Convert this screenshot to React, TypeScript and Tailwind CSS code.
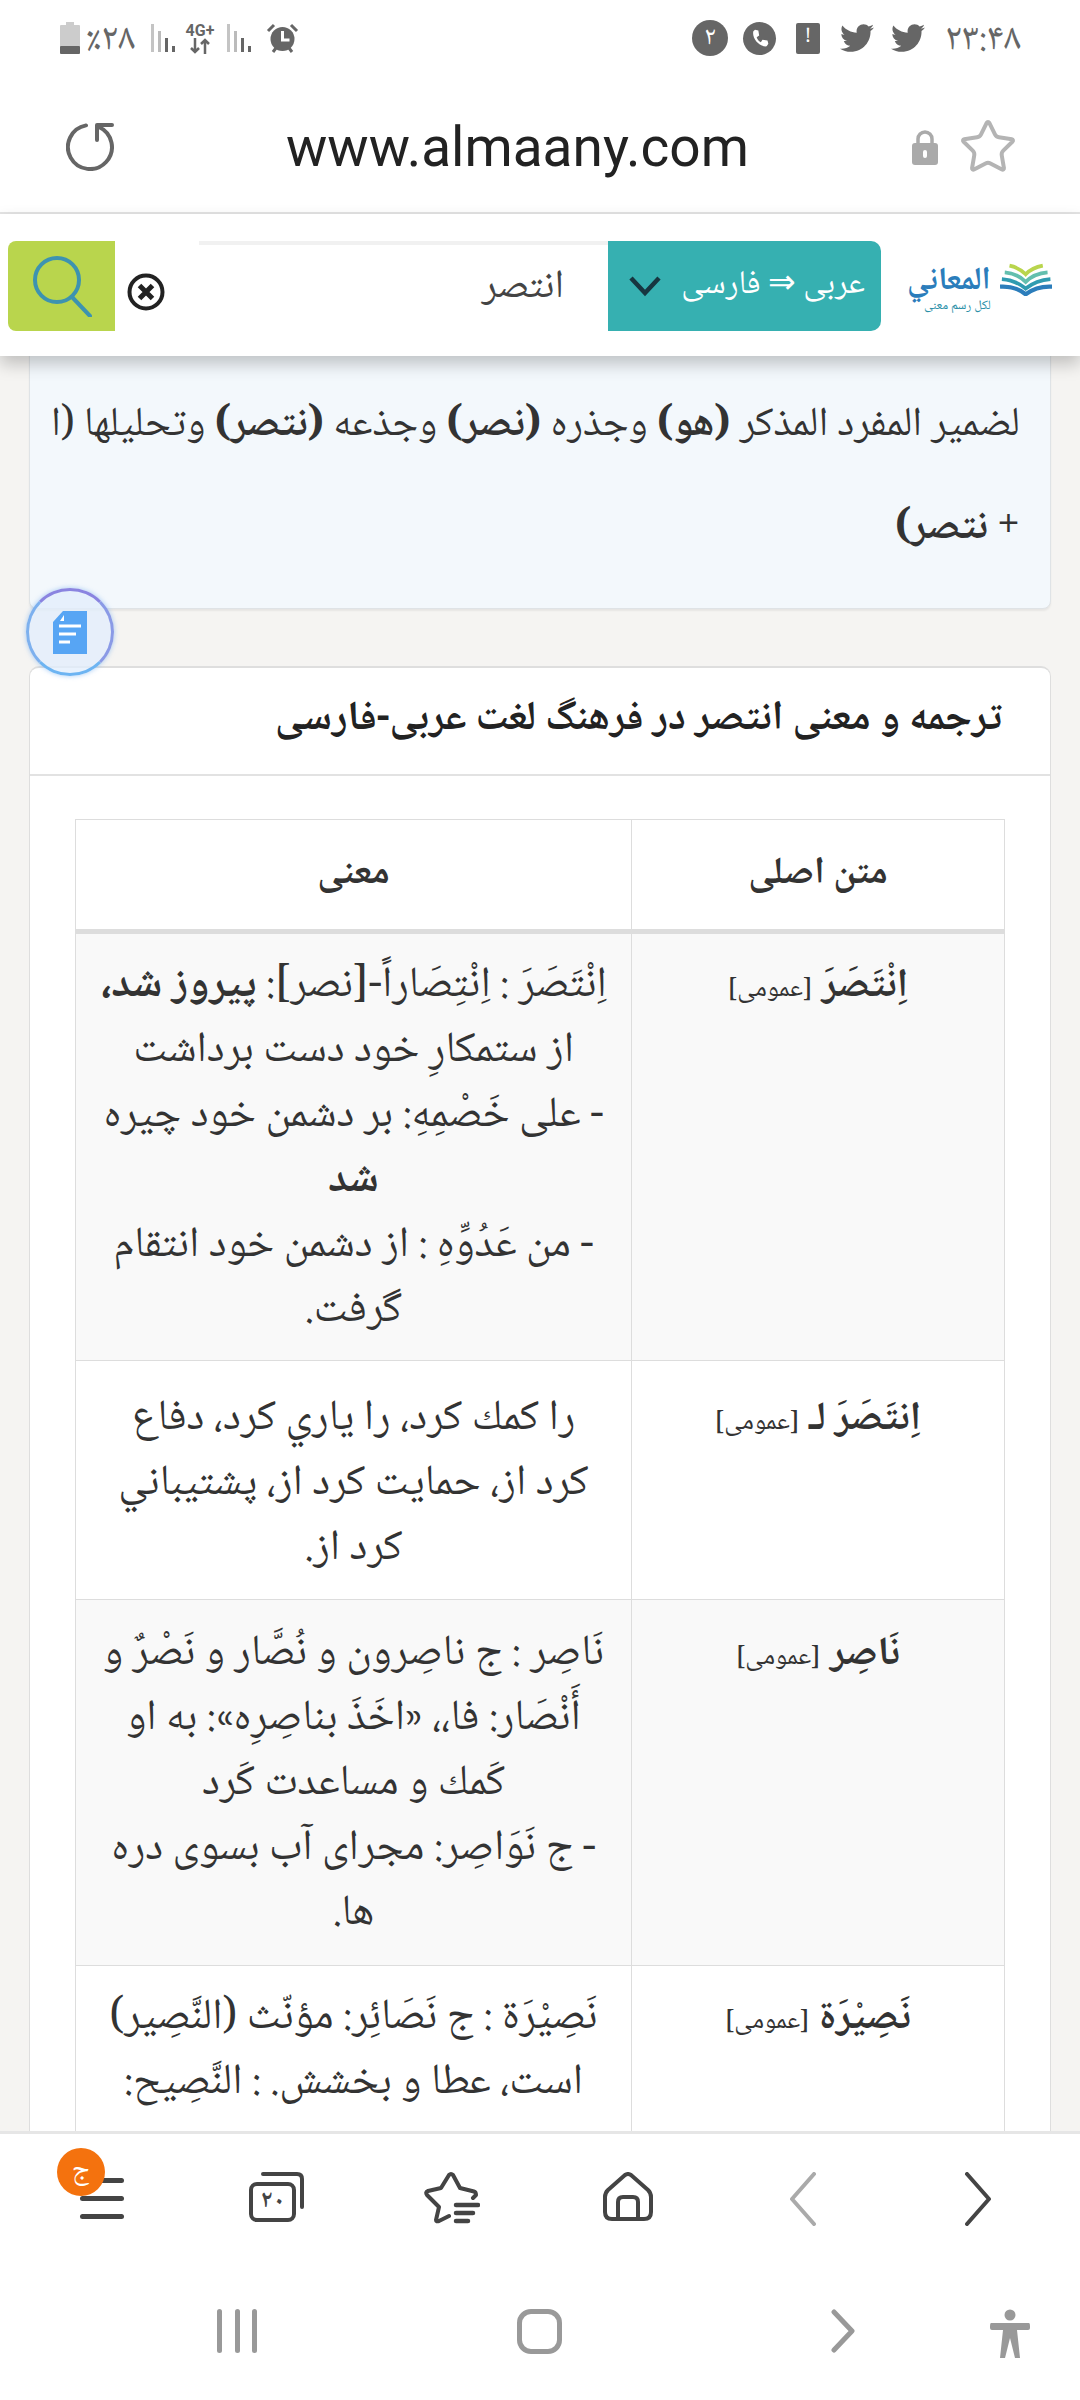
import { FaTwitter } from "react-icons/fa";
import { Star } from "lucide-react";

// ─── Table data ───────────────────────────────────────────────────────────────
const ROWS = [
  {
    word: "اِنْتَصَرَ",
    rowClass: "h-[429px] bg-[#f9f9f9]",
    padClass: "pt-[20px]",
    lines: [
      <>اِنْتَصَرَ : اِنْتِصَاراً-[نصر]: <b>پيروز شد،</b></>,
      <>از ستمكارِ خود دست برداشت</>,
      <>- على خَصْمِهِ: بر دشمن خود چيره</>,
      <b>شد</b>,
      <>- من عَدُوِّهِ : از دشمن خود انتقام</>,
      <>گرفت.</>,
    ],
  },
  {
    word: "اِنتَصَرَ لـ",
    rowClass: "h-[239px] bg-white",
    padClass: "pt-[26px]",
    lines: [
      <>را كمك كرد، را ياري كرد، دفاع</>,
      <>كرد از، حمايت كرد از، پشتيباني</>,
      <>كرد از.</>,
    ],
  },
  {
    word: "نَاصِر",
    rowClass: "h-[366px] bg-[#f9f9f9]",
    padClass: "pt-[22px]",
    lines: [
      <>نَاصِر : ج ناصِرون و نُصَّار و نَصْرٌ و</>,
      <>أَنْصَار: فا،، «اخَذَ بناصِرِه»: به او</>,
      <>كَمك و مساعدت كَرد</>,
      <>- ج نَوَاصِر: مجراى آب بسوى دره</>,
      <>ها.</>,
    ],
  },
  {
    word: "نَصِيْرَة",
    rowClass: "bg-white",
    padClass: "pt-[20px]",
    lines: [
      <>نَصِيْرَة : ج نَصَائِر: مؤنّث (النَّصِير)</>,
      <>است، عطا و بخشش. : النَّصِيح:</>,
      <>پند دهنده</>,
    ],
  },
];

// ─── Status bar ───────────────────────────────────────────────────────────────
function Signal() {
  return (
    <svg width="27" height="30" viewBox="0 0 27 30" fill="#666">
      <rect x="1" y="1" width="3" height="28" fill="#c4c4c4" />
      <rect x="8" y="8" width="3" height="21" fill="#bbb" />
      <rect x="15" y="15" width="3" height="14" />
      <rect x="22" y="23" width="3" height="6" />
    </svg>
  );
}

function StatusBar() {
  return (
    <div className="h-[76px] flex items-center justify-between pl-[60px] pr-[59px] text-[#666]">
      <div className="flex items-center">
        <svg width="20" height="32" viewBox="0 0 20 32">
          <rect x="6" y="0" width="8" height="4" fill="#ccc" />
          <rect x="0" y="3" width="20" height="22" rx="1" fill="#ccc" />
          <rect x="0" y="24" width="20" height="8" rx="1" fill="#666" />
        </svg>
        <span className="ml-[6px] w-[58px] pt-[5px] text-[38px] leading-none">٪۲۸</span>
        <div className="ml-[6px]"><Signal /></div>
        <div className="ml-[5px] w-[36px] flex flex-col items-center">
          <span className="font-['Roboto',sans-serif] font-bold text-[16px] leading-[15px]">4G+</span>
          <svg width="22" height="16" viewBox="0 0 22 16" fill="none" stroke="#666" strokeWidth="2.5">
            <path d="M6 0v14M2 10l4 4 4-4M16 16V2M12 6l4-4 4 4" />
          </svg>
        </div>
        <div className="ml-[8px]"><Signal /></div>
        <svg className="ml-[13px]" width="33" height="30" viewBox="0 0 33 30">
          <circle cx="16.5" cy="16" r="12" fill="#666" />
          <path d="M16.5 8v9h7" fill="none" stroke="#fff" strokeWidth="3" />
          <path d="M2 8l6-6M31 8l-6-6" stroke="#666" strokeWidth="3" />
          <path d="M7 29l3-4M26 29l-3-4" stroke="#666" strokeWidth="3" />
        </svg>
      </div>
      <div className="flex items-center">
        <span className="w-[36px] h-[36px] rounded-full bg-[#666] text-white text-[26px] leading-none flex items-center justify-center">۲</span>
        <span className="ml-[15px] w-[33px] h-[33px] rounded-full bg-[#666] flex items-center justify-center">
          <svg width="20" height="20" viewBox="0 0 24 24" fill="#fff">
            <path d="M6 2l4 1 1 6-3 2c1 3 3 5 5 6l2-3 6 1 1 4-2 3C11 23 2 12 4 4z" />
          </svg>
        </span>
        <span className="ml-[20px] w-[24px] h-[31px] rounded-[2px] bg-[#666] text-white font-bold text-[20px] flex items-center justify-center">!</span>
        <FaTwitter className="ml-[20px]" size={34} />
        <FaTwitter className="ml-[17px]" size={34} />
        <span className="ml-[17px] w-[79px] pt-[5px] text-[38px] leading-none text-right">۲۳:۴۸</span>
      </div>
    </div>
  );
}

// ─── Address bar ──────────────────────────────────────────────────────────────
function AddressBar() {
  return (
    <div className="h-[138px] border-b-2 border-[#e4e4e4] flex items-center pl-[66px] pr-[62px] pt-[6px]">
      <svg width="48" height="48" viewBox="0 0 48 48" fill="none" stroke="#666" strokeWidth="4" strokeLinecap="round" strokeLinejoin="round">
        <path d="M20 2.4A22 22 0 1 0 33 4" />
        <path d="M46 2H31v15" />
      </svg>
      <span className="ml-[172px] font-['Roboto',sans-serif] text-[55px] leading-none text-[#222]">www.almaany.com</span>
      <div className="ml-auto flex items-center gap-[20px]">
        <svg width="26" height="35" viewBox="0 0 26 35">
          <path d="M6 14V9a7 7 0 0 1 14 0v5" fill="none" stroke="#aaa" strokeWidth="3.5" />
          <rect x="0" y="13" width="26" height="22" rx="3" fill="#aaa" />
          <rect x="11" y="20" width="4" height="8" rx="2" fill="#fff" />
        </svg>
        <Star size={60} stroke="#b4b4b4" strokeWidth={1.6} />
      </div>
    </div>
  );
}

// ─── Search row ───────────────────────────────────────────────────────────────
function SearchRow() {
  return (
    <div className="relative z-10 h-[142px] bg-white shadow-[0_8px_16px_rgba(0,0,0,0.22)] pt-[27px] pl-[8px] flex items-start">
      <div className="w-[107px] h-[90px] bg-[#b9d54d] rounded-l-[8px] flex items-center justify-center">
        <svg width="60" height="62" viewBox="0 0 60 62" fill="none" stroke="#3d93b0" strokeWidth="4">
          <circle cx="25" cy="25" r="22" />
          <path d="M40 42l18 19" strokeLinecap="round" />
        </svg>
      </div>
      <svg className="ml-[12px] mt-[32px]" width="38" height="38" viewBox="0 0 38 38" fill="none" stroke="#222" strokeWidth="4">
        <circle cx="19" cy="19" r="16.5" />
        <path d="M12.5 12.5l13 13M25.5 12.5l-13 13" strokeWidth="5" />
      </svg>
      <div dir="rtl" className="ml-[34px] w-[409px] h-[90px] border-t-4 border-[#f1f1f1] pr-[44px] flex items-center text-[40px] leading-none text-[#444]">
        انتصر
      </div>
      <div dir="rtl" className="w-[273px] h-[90px] bg-[#36b0b1] rounded-r-[10px] flex items-center pr-[16px] text-white text-[33px] leading-none whitespace-nowrap">
        <span>عربى ⇒ فارسى</span>
        <svg className="mr-auto ml-[20px]" width="34" height="22" viewBox="0 0 34 22" fill="none" stroke="#173640" strokeWidth="4.5">
          <path d="M3 3l14 15L31 3" />
        </svg>
      </div>
      <div dir="rtl" className="ml-[26px] mt-[22px] w-[145px] flex items-start">
        <svg width="55" height="33" viewBox="0 0 55 33" fill="none" strokeWidth="4">
          <path d="M10 2Q20 4 27 11Q34 4 45 2" stroke="#b9d54d" />
          <path d="M5 9Q18 10 27 19Q36 10 50 9" stroke="#63bfae" />
          <path d="M2 16Q16 17 27 26Q38 17 53 16" stroke="#2f9bb0" />
          <path d="M0 24Q16 23 27 32Q39 23 55 24" stroke="#2b7dbb" strokeWidth="4.5" />
        </svg>
        <div className="mr-[9px] mt-[2px] flex flex-col items-start">
          <span className="font-bold text-[32px] leading-[34px] text-[#2b7dbb] whitespace-nowrap">المعاني</span>
          <span className="text-[13px] leading-[14px] text-[#2b90a8] whitespace-nowrap">لكل رسم معنى</span>
        </div>
      </div>
    </div>
  );
}

// ─── Page content ─────────────────────────────────────────────────────────────
function Content() {
  return (
    <div className="relative flex-1 overflow-hidden bg-[#f5f4f2] px-[29px]">
      {/* floating notes button */}
      <div className="absolute left-[26px] top-[232px] z-[5] w-[88px] h-[88px] rounded-full border-[3px] border-t-[#8a84e0] border-r-[#8a9ae6] border-b-[#6db4f2] border-l-[#7db0ee] bg-[rgba(225,238,252,0.75)] shadow-[0_0_5px_rgba(110,170,240,0.6)] flex items-center justify-center">
        <svg width="34" height="43" viewBox="0 0 34 43">
          <path d="M10 0h24v43H0V11z" fill="#57a5f4" />
          <path d="M7 10l4-6v6z" fill="#fff" />
          <path d="M6 15h22M6 23h17M6 31h11" stroke="#fff" strokeWidth="3" />
        </svg>
      </div>

      <div dir="rtl" className="-mt-[91px] h-[344px] bg-[#f3f8fc] border border-[#dfe3e6] rounded-b-[8px] px-[30px] pt-[6px] text-[41px] leading-[103px] text-[#333] shadow-[0_2px_2px_rgba(0,0,0,0.06)] whitespace-nowrap overflow-hidden">
        <div>انتصر فعل ماض مبني للمعلوم مسند إلى</div>
        <div>
          لضمير المفرد المذكر <b>(هو)</b> وجذره <b>(نصر)</b> وجذعه <b>(نتصر)</b> وتحليلها (ا
        </div>
        <div>
          + <b>نتصر)</b>
        </div>
      </div>

      <div className="mt-[57px] bg-white border-x border-t-2 border-[#dedede] rounded-t-[10px]">
        <div dir="rtl" className="h-[108px] border-b-2 border-[#e2e2e2] pr-[48px] flex items-center font-bold text-[41px] text-[#222]">
          ترجمه و معنى انتصر در فرهنگ لغت عربى-فارسى
        </div>
        <div className="px-[45px] pt-[43px]">
          <table dir="rtl" className="w-full table-fixed border-collapse text-[43px] text-[#333]">
            <thead>
              <tr className="h-[112px]">
                <th className="w-[373px] border border-b-[5px] border-[#dddddd] font-bold text-[38px]">متن اصلى</th>
                <th className="border border-b-[5px] border-[#dddddd] font-bold text-[38px]">معنى</th>
              </tr>
            </thead>
            <tbody>
              {ROWS.map((row) => (
                <tr key={row.word} className={row.rowClass}>
                  <td className={`border border-[#dddddd] align-top text-center leading-[65px] ${row.padClass}`}>
                    <b className="text-[40px]">{row.word}</b> <span className="text-[26px]">[عمومى]</span>
                  </td>
                  <td className={`border border-[#dddddd] align-top text-center leading-[65px] whitespace-nowrap ${row.padClass}`}>
                    {row.lines.map((line, i) => (
                      <div key={i}>{line}</div>
                    ))}
                  </td>
                </tr>
              ))}
            </tbody>
          </table>
        </div>
      </div>
    </div>
  );
}

// ─── Bottom bars ──────────────────────────────────────────────────────────────
function BrowserToolbar() {
  return (
    <div className="relative z-10 h-[178px] bg-white border-t-[3px] border-[#e6e6e6] grid grid-cols-6 px-[14px] pt-[38px] justify-items-center items-start text-[#444]">
      <div className="relative w-[44px] h-[52px] flex flex-col justify-between pt-[6px] pb-[5px]">
        <i className="block h-[5px] rounded-full bg-[#444]" />
        <i className="block h-[5px] rounded-full bg-[#444]" />
        <i className="block h-[5px] rounded-full bg-[#444]" />
        <span className="absolute -left-[23px] -top-[24px] w-[48px] h-[48px] rounded-full bg-[#f4720e] text-white text-[28px] leading-none flex items-center justify-center">ج</span>
      </div>
      <div className="relative w-[55px] h-[50px]">
        <svg width="55" height="50" viewBox="0 0 55 50" fill="none" stroke="#444" strokeWidth="4" strokeLinecap="round">
          <path d="M14 2h34q5 0 5 5v28" />
          <rect x="2" y="12" width="43" height="36" rx="6" />
        </svg>
        <span className="absolute left-[2px] top-[12px] w-[43px] h-[36px] flex items-center justify-center text-[24px] font-bold leading-none">۲۰</span>
      </div>
      <svg width="56" height="52" viewBox="0 0 56 52" fill="none" stroke="#444" strokeWidth="4" strokeLinecap="round" strokeLinejoin="round">
        <path d="M49 26l3-3q0-3-2-3.500L36 16 29 3q-2-2-4 0L17 16 4 19q-3 1-1 4l12 12-3 13q0 2 3 1l10-5" />
        <path d="M32 33h22M32 41h17M32 49h12" strokeWidth="4.500" />
      </svg>
      <svg width="50" height="50" viewBox="0 0 50 50" fill="none" stroke="#444" strokeWidth="4" strokeLinejoin="round">
        <path d="M22 3L5 18Q2 21 2 25V40Q2 47 9 47H41Q48 47 48 40V25Q48 21 45 18L28 3Q25 1 22 3Z" />
        <path d="M15 47V30Q15 25 20 25H30Q35 25 35 30V47" />
      </svg>
      <svg width="28" height="54" viewBox="0 0 28 54" fill="none" stroke="#aaa" strokeWidth="4" strokeLinecap="round" strokeLinejoin="round">
        <path d="M25 2L3 27l22 25" />
      </svg>
      <svg width="28" height="54" viewBox="0 0 28 54" fill="none" stroke="#444" strokeWidth="4" strokeLinecap="round" strokeLinejoin="round">
        <path d="M3 2l22 25L3 52" />
      </svg>
    </div>
  );
}

function NavBar() {
  return (
    <div className="h-[91px] bg-white flex items-start pl-[217px]">
      <div className="w-[40px] h-[44px] flex justify-between">
        <i className="block w-[5px] h-full rounded-full bg-[#999]" />
        <i className="block w-[5px] h-full rounded-full bg-[#999]" />
        <i className="block w-[5px] h-full rounded-full bg-[#999]" />
      </div>
      <div className="ml-[260px] w-[45px] h-[45px] rounded-[14px] border-[5px] border-[#999]" />
      <svg className="ml-[268px]" width="26" height="44" viewBox="0 0 26 44" fill="none" stroke="#999" strokeWidth="5" strokeLinecap="round" strokeLinejoin="round">
        <path d="M4 3l18 19L4 41" />
      </svg>
      <svg className="ml-[134px]" width="40" height="50" viewBox="0 0 40 50" fill="#999">
        <circle cx="20" cy="6" r="5.500" />
        <path d="M1 14q-1 0-1 3v2q0 2 2 2h11l-3 28h5l5-20 5 20h5l-3-28h11q2 0 2-2v-2q0-3-1-3z" />
      </svg>
    </div>
  );
}

export default function App() {
  return (
    <div className="w-[1080px] h-[2400px] overflow-hidden flex flex-col bg-white font-['Noto_Naskh_Arabic','Liberation_Serif',serif]">
      <StatusBar />
      <AddressBar />
      <SearchRow />
      <Content />
      <BrowserToolbar />
      <NavBar />
    </div>
  );
}
